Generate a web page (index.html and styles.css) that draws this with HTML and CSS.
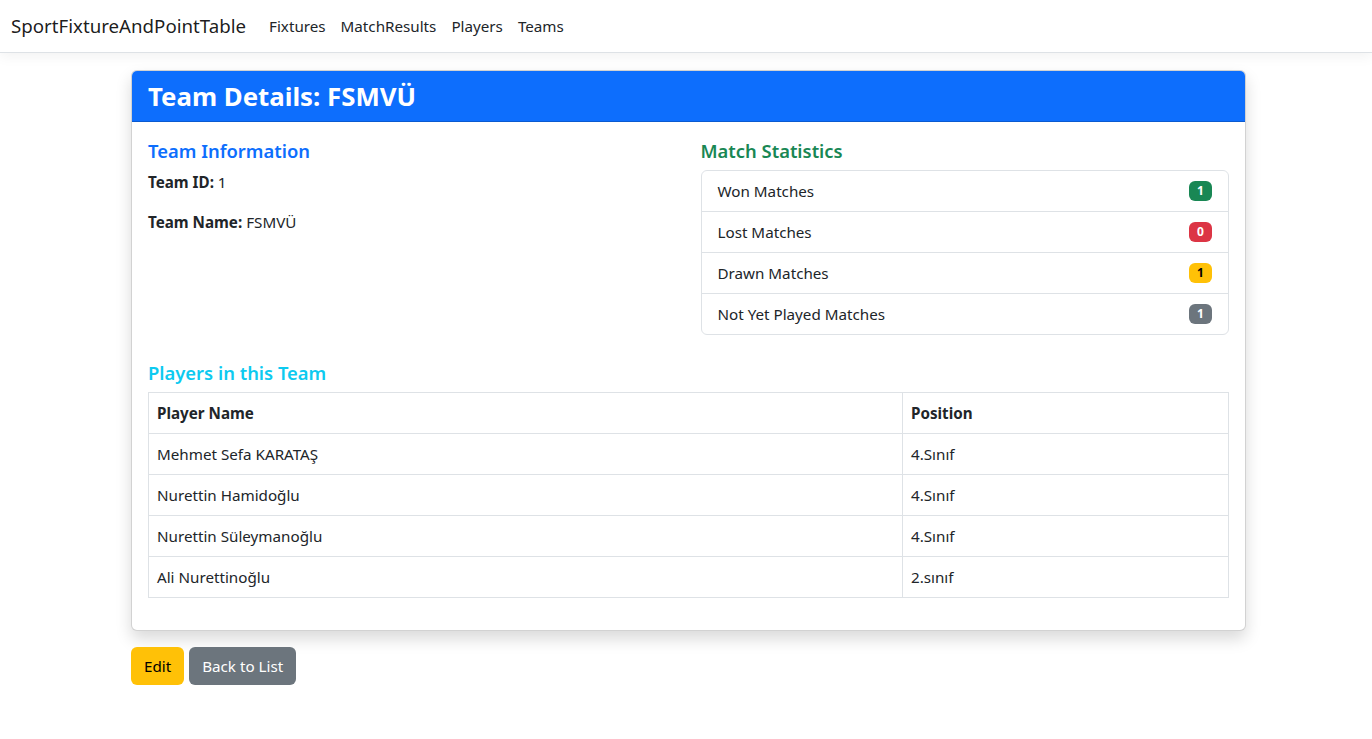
FILE: index.html
```html
<!DOCTYPE html>
<html lang="tr">
<head>
<meta charset="utf-8">
<title>Team Details - SportFixtureAndPointTable</title>
<link rel="stylesheet" href="styles.css">
</head>
<body>
<header class="navbar">
  <a class="brand" href="#">SportFixtureAndPointTable</a>
  <nav class="nav">
    <a class="nav-link" href="#">Fixtures</a>
    <a class="nav-link" href="#">MatchResults</a>
    <a class="nav-link" href="#">Players</a>
    <a class="nav-link" href="#">Teams</a>
  </nav>
</header>
<main class="container">
  <section class="card">
    <div class="card-header">
      <h3 class="card-title">Team Details: FSMVÜ</h3>
    </div>
    <div class="card-body">
      <div class="row">
        <div class="col">
          <h5 class="heading text-primary">Team Information</h5>
          <p class="info"><strong>Team ID:</strong> 1</p>
          <p class="info"><strong>Team Name:</strong> FSMVÜ</p>
        </div>
        <div class="col">
          <h5 class="heading text-success">Match Statistics</h5>
          <ul class="list-group">
            <li class="list-item">Won Matches <span class="badge bg-success">1</span></li>
            <li class="list-item">Lost Matches <span class="badge bg-danger">0</span></li>
            <li class="list-item">Drawn Matches <span class="badge bg-warning">1</span></li>
            <li class="list-item">Not Yet Played Matches <span class="badge bg-secondary">1</span></li>
          </ul>
        </div>
      </div>
      <h5 class="heading text-info players-heading">Players in this Team</h5>
      <table class="table">
        <thead>
          <tr><th class="col-name">Player Name</th><th>Position</th></tr>
        </thead>
        <tbody>
          <tr><td>Mehmet Sefa KARATAŞ</td><td>4.Sınıf</td></tr>
          <tr><td>Nurettin Hamidoğlu</td><td>4.Sınıf</td></tr>
          <tr><td>Nurettin Süleymanoğlu</td><td>4.Sınıf</td></tr>
          <tr><td>Ali Nurettinoğlu</td><td>2.sınıf</td></tr>
        </tbody>
      </table>
    </div>
  </section>
  <div class="actions">
    <a class="btn btn-warning" href="#">Edit</a>
    <a class="btn btn-secondary" href="#">Back to List</a>
  </div>
</main>
</body>
</html>
```
FILE: styles.css
```css
* { box-sizing: border-box; }
html, body { margin: 0; }
body {
  font-family: "Noto Sans", "Open Sans", sans-serif;
  font-size: 15.2px;
  line-height: 24px;
  color: #212529;
  background: #fff;
}
a { text-decoration: none; }

.navbar {
  display: flex;
  align-items: center;
  height: 53px;
  padding: 0 12px 1px 11px;
  background: #fff;
  border-bottom: 1px solid #dee2e6;
  box-shadow: 0 4px 12px rgba(0,0,0,.05);
}
.brand {
  font-size: 18.7px;
  line-height: 30px;
  color: rgba(0,0,0,.9);
  margin-right: 15px;
}
.nav { display: flex; }
.nav-link {
  color: #212529;
  padding: 8px;
  line-height: 24px;
}
.nav-link + .nav-link { margin-left: -1px; }

.container {
  width: 1115px;
  margin: 17px 0 0 131px;
}
.card {
  border: 1px solid rgba(0,0,0,.175);
  border-radius: 6px;
  box-shadow: 0 8px 16px rgba(0,0,0,.15);
  background: #fff;
  overflow: hidden;
}
.card-header {
  background: #0d6efd;
  color: #fff;
  padding: 8px 16px;
  border-bottom: 1px solid rgba(0,0,0,.175);
}
.card-title {
  margin: 0;
  font-size: 25.8px;
  font-weight: 700;
  line-height: 34px;
}
.card-body { padding: 16px; }
.row {
  display: grid;
  grid-template-columns: 1fr 1fr;
  column-gap: 24px;
  align-items: start;
}
.heading {
  margin: 0 0 8px;
  padding-top: 1px;
  height: 24px;
  font-size: 18.4px;
  font-weight: 600;
  line-height: 24px;
}
.text-primary { color: #0d6efd; }
.text-success { color: #198754; }
.text-info { color: #0dcaf0; }
.info { margin: 0 0 16px; }
.info strong { font-weight: 700; }

.list-group {
  list-style: none;
  margin: 0;
  padding: 0;
  border: 1px solid #dee2e6;
  border-radius: 6px;
}
.list-item {
  display: flex;
  justify-content: space-between;
  align-items: center;
  padding: 8px 16px;
  line-height: 24px;
  border-top: 1px solid #dee2e6;
}
.list-item:first-child { border-top: 0; }
.badge {
  display: inline-flex;
  align-items: center;
  justify-content: center;
  min-width: 23px;
  height: 20px;
  font-size: 12px;
  font-weight: 700;
  line-height: 12px;
  padding: 0 8px;
  border-radius: 6px;
  color: #fff;
}
.bg-success { background: #198754; }
.bg-danger { background: #dc3545; }
.bg-warning { background: #ffc107; color: #000; }
.bg-secondary { background: #6c757d; }

.players-heading { margin-top: 25px; }
.table {
  width: 100%;
  border-collapse: collapse;
  margin-bottom: 16px;
}
.table th, .table td {
  border: 1px solid #dee2e6;
  padding: 8px;
  line-height: 24px;
  text-align: left;
}
.table th { font-weight: 700; }
.col-name { width: 754px; }

.actions {
  display: flex;
  gap: 5px;
  margin-top: 16px;
}
.btn {
  display: inline-block;
  padding: 6px 12px;
  line-height: 24px;
  font-size: 15.2px;
  border-radius: 6px;
  border: 1px solid transparent;
}
.btn-warning { background: #ffc107; color: #000; }
.btn-secondary { background: #6c757d; color: #fff; }
```
